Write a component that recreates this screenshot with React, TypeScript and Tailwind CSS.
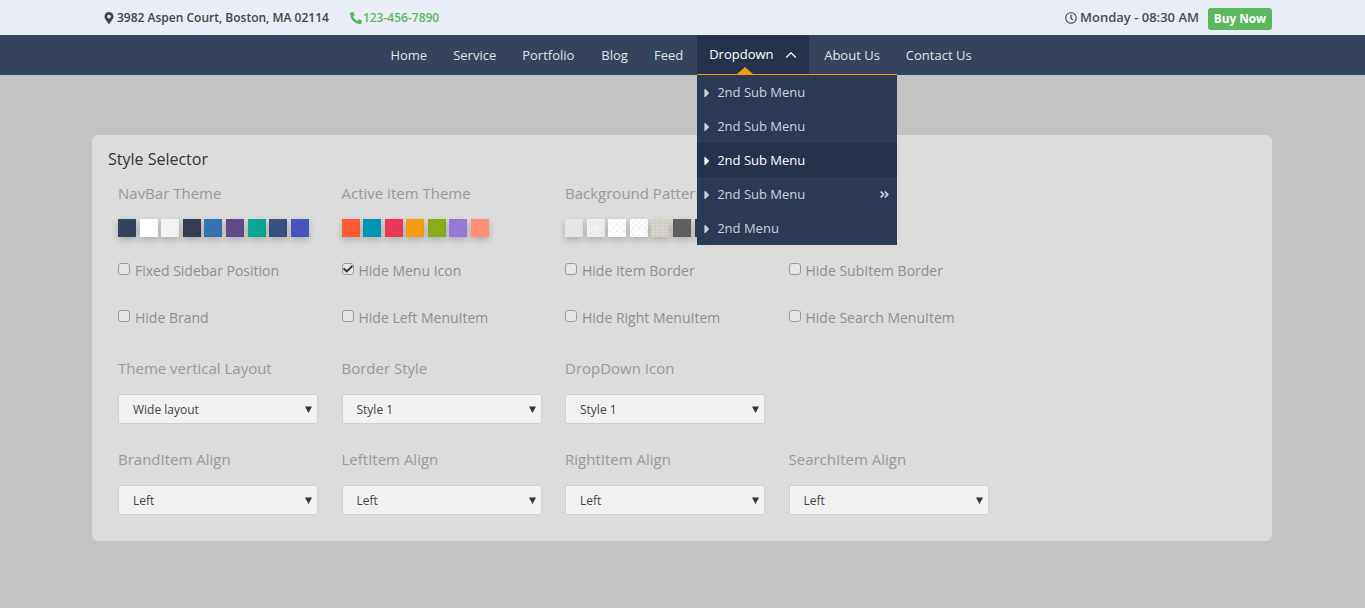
import { ChevronUp } from 'lucide-react'
import { FaMapMarkerAlt, FaPhoneAlt, FaRegClock, FaCaretRight, FaAngleDoubleRight, FaCheck } from 'react-icons/fa'

const subMenu = ['2nd Sub Menu', '2nd Sub Menu', '2nd Sub Menu', '2nd Sub Menu', '2nd Menu']

const navbarColors = ['bg-[#34445f]', 'bg-white', 'bg-[#f2f2f2]', 'bg-[#323d52]', 'bg-[#3672b0]', 'bg-[#604a8a]', 'bg-[#0ba594]', 'bg-[#37517f]', 'bg-[#4655bb]']
const activeColors = ['bg-[#ff5a36]', 'bg-[#0095b3]', 'bg-[#e83a58]', 'bg-[#f59c10]', 'bg-[#8aab1c]', 'bg-[#9778da]', 'bg-[#ff9075]']
const patternSwatches = [
  'bg-[#e4e6e6]',
  'bg-[#ececec] bg-[linear-gradient(#f3f3f3_1px,transparent_1px),linear-gradient(90deg,#f3f3f3_1px,transparent_1px)] bg-[length:9px_9px]',
  'bg-white bg-[repeating-linear-gradient(45deg,#eeeeee_0_1px,transparent_1px_5px),repeating-linear-gradient(-45deg,#eeeeee_0_1px,transparent_1px_5px)]',
  'bg-white bg-[repeating-linear-gradient(-45deg,#f3f3f3_0_1px,transparent_1px_4px),repeating-linear-gradient(45deg,#f3f3f3_0_1px,transparent_1px_4px)]',
  'bg-[#d8d4cc] bg-[radial-gradient(#c2beb4_1px,transparent_1px)] bg-[length:3px_3px]',
  'bg-[#5e5e5e]',
  'bg-[#3c3c3c]',
]

function Swatches({ colors }: { colors: string[] }) {
  return (
    <div className="flex gap-[3.6px] mt-[16px] h-[18px]">
      {colors.map((c, i) => (
        <div key={i} className={`w-[18px] h-[18px] shrink-0 shadow-[0_3px_7px_rgba(0,0,0,0.22)] ${c}`} />
      ))}
    </div>
  )
}

function Check({ label, checked }: { label: string; checked?: boolean }) {
  return (
    <div className="flex items-center h-5 text-[14px] text-[#8f8f8f]">
      <span className="relative w-3 h-3 mr-[5px] -mt-[2px] rounded-[3px] border border-[#9a9a9a] bg-[#e6e6e6] shrink-0">
        {checked && <FaCheck className="absolute left-0 top-0 text-[#333]" size={10} />}
      </span>
      {label}
    </div>
  )
}

function Select({ value }: { value: string }) {
  return (
    <div className="relative w-[200px] mt-[16px]">
      <select
        defaultValue={value}
        className="appearance-none block w-full h-[30px] pl-[14px] pt-[2px] text-[12px] text-[#444] bg-[#f1f1f1] border border-[#d0d0d0] rounded-[2px] outline-none"
      >
        <option>{value}</option>
      </select>
      <svg className="absolute right-[6px] top-[12px]" width="7" height="7" viewBox="0 0 7 7">
        <path d="M0 0.5h7L3.5 7z" fill="#333" />
      </svg>
    </div>
  )
}

function Heading({ children }: { children: string }) {
  return <div className="text-[15px] leading-5 text-[#999]">{children}</div>
}

export default function App() {
  return (
    <div className="min-h-[608px] bg-[#c3c3c3] font-['Open_Sans',sans-serif] overflow-hidden">
      <div className="h-[35px] bg-[#e9edf5]">
        <div className="w-[1180px] ml-[92px] h-full flex items-center justify-between pl-[11px] pt-[1px]">
          <div className="flex items-center text-[12px] font-semibold text-[#444]">
            <FaMapMarkerAlt className="text-[#444] mr-[2px]" size={12} />
            3982 Aspen Court, Boston, MA 02114
            <span className="flex items-center ml-[21px] text-[#5cb85c]">
              <FaPhoneAlt className="mr-[1px]" size={12} />
              123-456-7890
            </span>
          </div>
          <div className="flex items-center text-[13px] font-semibold text-[#4c4c4c]">
            <FaRegClock className="mr-[3px]" size={12} />
            Monday - 08:30 AM
            <span className="ml-[9px] h-[22px] mt-[1px] w-[64px] justify-center flex items-center rounded-[3px] bg-[#5cb85c] text-white text-[11.8px] font-bold">
              Buy Now
            </span>
          </div>
        </div>
      </div>

      <div className="relative h-10 bg-[#34445f] flex justify-center text-[13px] text-[#dfe3ea]">
        <div className="flex pr-[5px]">
          <div className="px-[13px] pt-[1px] flex items-center">Home</div>
          <div className="px-[13px] pt-[1px] flex items-center">Service</div>
          <div className="px-[13px] pt-[1px] flex items-center">Portfolio</div>
          <div className="px-[13px] ml-[1px] pt-[1px] flex items-center">Blog</div>
          <div className="px-[13px] pt-[1px] flex items-center">Feed</div>
          <div className="relative w-[112px] ml-[1px] pl-3 flex items-center bg-[#24324d] text-white font-medium">
            Dropdown
            <ChevronUp className="ml-[8px]" size={18} strokeWidth={1.5} />
            <span className="absolute left-[40px] bottom-[1px] w-0 h-0 border-x-[8px] border-x-transparent border-b-[7px] border-b-[#f59c10]" />
            <div className="absolute left-0 top-[39px] w-[200px] z-10 border-t border-[#f59c10] bg-[#2a3a57] font-normal text-[#ccd2dc]">
              {subMenu.map((item, i) => (
                <div key={i} className={`h-[34px] flex items-center pl-[3px] pt-[1px] ${i === 2 ? 'bg-[#24324d] text-white font-medium' : ''}`}>
                  <FaCaretRight size={14} className="mr-[3px]" />
                  <span className="flex-1">{item}</span>
                  {i === 3 && <FaAngleDoubleRight size={11} className="mr-[7px]" />}
                </div>
              ))}
            </div>
          </div>
          <div className="px-[15px] pt-[1px] flex items-center">About Us</div>
          <div className="px-[11px] pt-[1px] flex items-center">Contact Us</div>
        </div>
      </div>

      <div className="w-[1180px] h-[406px] ml-[92px] mt-[60px] bg-[#dcdcdc] rounded-[6px] pt-[14px] pl-[16px]">
        <div className="text-[16px] leading-5 text-[#333]">Style Selector</div>
        <div className="grid grid-cols-[223.5px_223.5px_223.5px_223.5px] pl-[10px] mt-[14px]">
          <div>
            <Heading>NavBar Theme</Heading>
            <Swatches colors={navbarColors} />
          </div>
          <div>
            <Heading>Active item Theme</Heading>
            <Swatches colors={activeColors} />
          </div>
          <div>
            <Heading>Background Pattern</Heading>
            <Swatches colors={patternSwatches} />
          </div>
          <div />
        </div>

        <div className="grid grid-cols-[223.5px_223.5px_223.5px_223.5px] gap-y-[27px] pl-[10px] mt-[23px]">
          <Check label="Fixed Sidebar Position" />
          <Check label="Hide Menu Icon" checked />
          <Check label="Hide Item Border" />
          <Check label="Hide SubItem Border" />
          <Check label="Hide Brand" />
          <Check label="Hide Left MenuItem" />
          <Check label="Hide Right MenuItem" />
          <Check label="Hide Search MenuItem" />
        </div>

        <div className="grid grid-cols-[223.5px_223.5px_223.5px_223.5px] pl-[10px] mt-[31px]">
          <div>
            <Heading>Theme vertical Layout</Heading>
            <Select value="Wide layout" />
          </div>
          <div>
            <Heading>Border Style</Heading>
            <Select value="Style 1" />
          </div>
          <div>
            <Heading>DropDown Icon</Heading>
            <Select value="Style 1" />
          </div>
          <div />
        </div>

        <div className="grid grid-cols-[223.5px_223.5px_223.5px_223.5px] pl-[10px] mt-[25px]">
          {['BrandItem Align', 'LeftItem Align', 'RightItem Align', 'SearchItem Align'].map((h) => (
            <div key={h}>
              <Heading>{h}</Heading>
              <Select value="Left" />
            </div>
          ))}
        </div>
      </div>
    </div>
  )
}
